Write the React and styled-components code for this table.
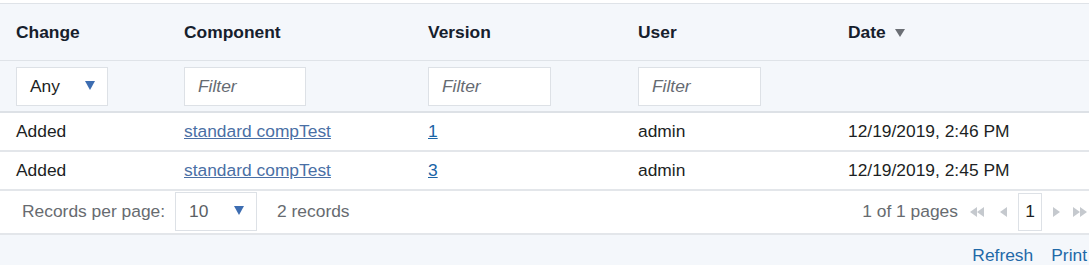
import styled, { createGlobalStyle } from "styled-components"

const GlobalStyle = createGlobalStyle`
  body {
    margin: 0;
    font-family: "Liberation Sans", Arial, sans-serif;
    font-size: 17.4px;
    color: #1c1f24;
    background: #fff;
    overflow: hidden;
  }
`

const Page = styled.div`
  width: 1089px;
  padding-top: 3px;
  overflow: hidden;
`

const Table = styled.table`
  width: 1089px;
  border-collapse: collapse;
  table-layout: fixed;
  border-top: 1px solid #dfe3e8;
`

const HeadRow = styled.tr`
  background: #f4f7fb;
  height: 57px;
  border-bottom: 1px solid #dfe3e8;
`

const Th = styled.th`
  text-align: left;
  padding: 0 0 0 16px;
  font-weight: 700;
  color: #16202c;
`

const SortArrow = styled.span`
  display: inline-block;
  margin-left: 9px;
  width: 0;
  height: 0;
  border-left: 5px solid transparent;
  border-right: 5px solid transparent;
  border-top: 8px solid #6b6f75;
  vertical-align: 1px;
`

const FilterRow = styled.tr`
  background: #f4f7fb;
  height: 51px;
  border-bottom: 2px solid #dde1e6;
`

const Td = styled.td`
  padding: 0 0 0 16px;
  vertical-align: middle;
`

const FilterInput = styled.div`
  box-sizing: border-box;
  width: ${(p) => p.$w || 123}px;
  height: 39px;
  margin-top: 1px;
  background: #fff;
  border: 1px solid #dde1e6;
  display: flex;
  align-items: center;
  padding-left: 13px;
  font-style: italic;
  color: #666b72;
`

const SelectBox = styled.div`
  box-sizing: border-box;
  width: ${(p) => p.$w}px;
  height: 39px;
  margin-top: ${(p) => p.$mt || 0}px;
  background: #fff;
  border: 1px solid #dde1e6;
  display: flex;
  align-items: center;
  justify-content: space-between;
  padding: 0 12px 0 13px;
  color: ${(p) => p.$color || "#1c1f24"};
`

const DownTri = styled.span`
  width: 0;
  height: 0;
  border-left: 5px solid transparent;
  border-right: 5px solid transparent;
  border-top: 9px solid #3d6db1;
  margin-top: -2px;
`

const DataRow = styled.tr`
  height: 39px;
  border-bottom: 2px solid #e3e6ea;
`

const Link = styled.a`
  color: ${(p) => p.$color || "#4a6fa5"};
  text-decoration: underline;
`

const Pager = styled.div`
  height: 42px;
  display: flex;
  align-items: center;
  padding: 0 2px 0 22px;
  color: #676b70;
  border-bottom: 2px solid #e3e6ea;
`

const PagerLeft = styled.div`
  display: flex;
  align-items: center;
  gap: 10px;
  flex: 1;
`

const RecordCount = styled.span`
  margin-left: 10px;
`

const PagerRight = styled.div`
  display: flex;
  align-items: center;
  flex-shrink: 0;
`

const PageCount = styled.span`
  margin-right: 12px;
  white-space: nowrap;
`

const NavIcon = styled.svg`
  flex-shrink: 0;
  width: 16px;
  height: 10px;
  margin-left: ${(p) => p.$ml || 0}px;
  fill: #c5c9ce;
`

const PageBox = styled.div`
  box-sizing: border-box;
  width: 24px;
  height: 38px;
  margin-left: 8px;
  border: 1px solid #dde1e6;
  display: flex;
  align-items: center;
  justify-content: center;
  color: #1c1f24;
  background: #fff;
`

const Footer = styled.div`
  background: #f4f7fb;
  height: 31px;
  display: flex;
  justify-content: flex-end;
  align-items: flex-end;
  gap: 18px;
  padding-right: 2px;
`

const FooterLink = styled.a`
  color: #1f69a8;
  line-height: 18px;
  margin-bottom: 2px;
`

const rows = [
  { change: "Added", comp: "standard compTest", ver: "1", user: "admin", date: "12/19/2019, 2:46 PM" },
  { change: "Added", comp: "standard compTest", ver: "3", user: "admin", date: "12/19/2019, 2:45 PM" },
]

export default function App() {
  return (
    <Page>
      <GlobalStyle />
      <Table>
        <colgroup>
          <col style={{ width: 168 }} />
          <col style={{ width: 244 }} />
          <col style={{ width: 210 }} />
          <col style={{ width: 210 }} />
          <col />
        </colgroup>
        <thead>
          <HeadRow>
            <Th>Change</Th>
            <Th>Component</Th>
            <Th>Version</Th>
            <Th>User</Th>
            <Th>
              Date<SortArrow />
            </Th>
          </HeadRow>
          <FilterRow>
            <Td>
              <SelectBox $w={92} $mt={1}>
                Any <DownTri />
              </SelectBox>
            </Td>
            <Td>
              <FilterInput $w={122}>Filter</FilterInput>
            </Td>
            <Td>
              <FilterInput>Filter</FilterInput>
            </Td>
            <Td>
              <FilterInput>Filter</FilterInput>
            </Td>
            <Td />
          </FilterRow>
        </thead>
        <tbody>
          {rows.map((r, i) => (
            <DataRow key={i}>
              <Td>{r.change}</Td>
              <Td>
                <Link href="#">{r.comp}</Link>
              </Td>
              <Td>
                <Link href="#" $color="#1a64a6">
                  {r.ver}
                </Link>
              </Td>
              <Td>{r.user}</Td>
              <Td>{r.date}</Td>
            </DataRow>
          ))}
        </tbody>
      </Table>
      <Pager>
        <PagerLeft>
          <span>Records per page:</span>
          <SelectBox $w={82} $color="#5b5f64">
            10 <DownTri />
          </SelectBox>
          <RecordCount>2 records</RecordCount>
        </PagerLeft>
        <PagerRight>
          <PageCount>1 of 1 pages</PageCount>
          <NavIcon viewBox="0 0 16 10">
            <polygon points="0,5 7,0 7,10" />
            <polygon points="7,5 14,0 14,10" />
          </NavIcon>
          <NavIcon viewBox="0 0 16 10" $ml={8}>
            <polygon points="6,5 13,0 13,10" />
          </NavIcon>
          <PageBox>1</PageBox>
          <NavIcon viewBox="0 0 16 10" $ml={7}>
            <polygon points="4,0 11,5 4,10" />
          </NavIcon>
          <NavIcon viewBox="0 0 16 10" $ml={6}>
            <polygon points="2,0 9,5 2,10" />
            <polygon points="9,0 16,5 9,10" />
          </NavIcon>
        </PagerRight>
      </Pager>
      <Footer>
        <FooterLink>Refresh</FooterLink>
        <FooterLink>Print</FooterLink>
      </Footer>
    </Page>
  )
}
